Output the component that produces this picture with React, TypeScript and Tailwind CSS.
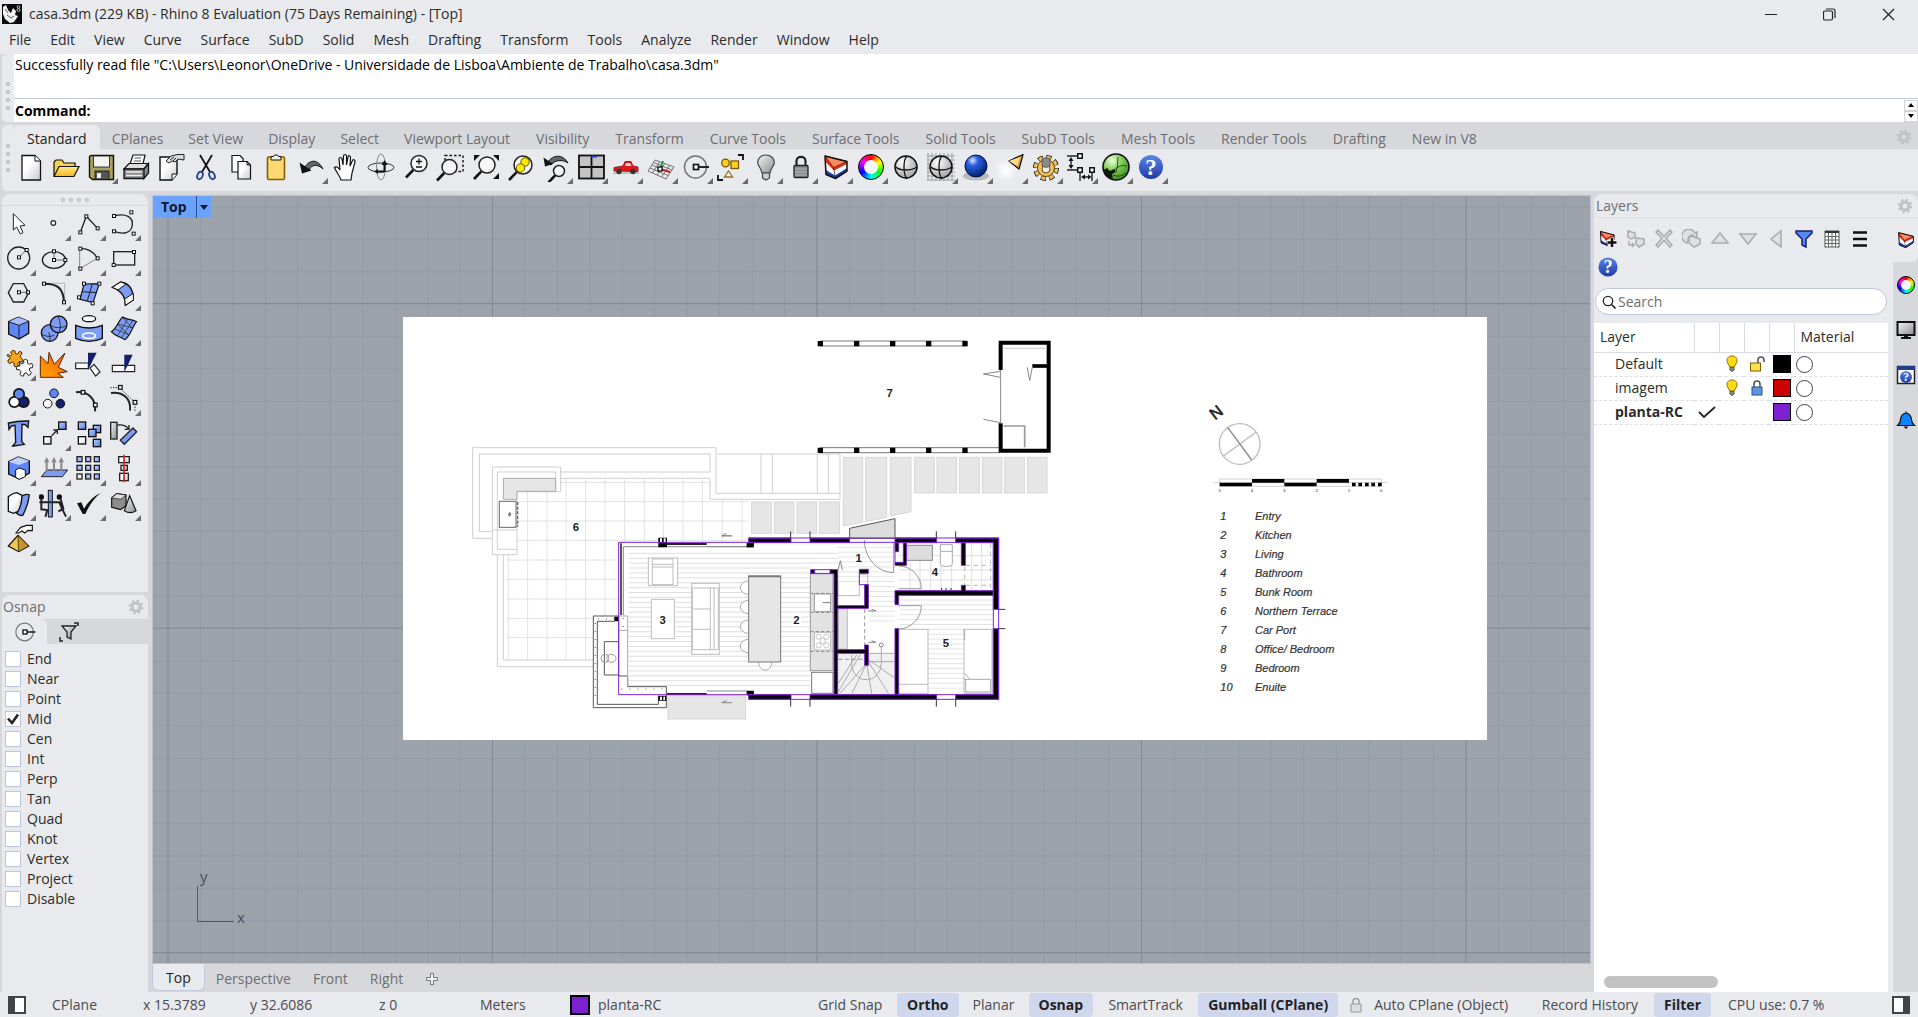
import React from "react";

type IconMap = Record<string, React.ReactNode>;

const BLUE = "#7c9cf5";
const NAVY = "#14206e";
const PURPLE = "#7d20d0";

/* Small square control point used across the curve icons. */
const Pt = ({ x, y, s = 9 }: { x: number; y: number; s?: number }) => (
  <rect x={x - s / 2} y={y - s / 2} width={s} height={s} fill="#fff" stroke="#111" strokeWidth={s / 3} />
);

const Defs = () => (
  <svg width="0" height="0" className="absolute" aria-hidden="true">
    <defs>
      <linearGradient id="paper" x1="0" y1="0" x2="1" y2="1">
        <stop offset="0.4" stopColor="#fff" />
        <stop offset="1" stopColor="#c9c9c9" />
      </linearGradient>
      <linearGradient id="gold" x1="0" y1="0" x2="0" y2="1">
        <stop offset="0" stopColor="#ffe98a" />
        <stop offset="1" stopColor="#f5b517" />
      </linearGradient>
      <linearGradient id="blueg" x1="0" y1="0" x2="1" y2="1">
        <stop offset="0" stopColor="#c0d0ff" />
        <stop offset="1" stopColor="#5078e8" />
      </linearGradient>
      <linearGradient id="greyg" x1="0" y1="0" x2="1" y2="1">
        <stop offset="0" stopColor="#f5f5f5" />
        <stop offset="1" stopColor="#8c8c8c" />
      </linearGradient>
      <linearGradient id="helpg" x1="0" y1="0" x2="0" y2="1">
        <stop offset="0" stopColor="#5a86e6" />
        <stop offset="1" stopColor="#1f3aa6" />
      </linearGradient>
      <linearGradient id="fire" x1="1" y1="0" x2="0" y2="1">
        <stop offset="0" stopColor="#ff5a00" />
        <stop offset="1" stopColor="#ffa600" />
      </linearGradient>
      <radialGradient id="ballg" cx="0.35" cy="0.3" r="0.8">
        <stop offset="0" stopColor="#fff" />
        <stop offset="1" stopColor="#9a9a9a" />
      </radialGradient>
      <radialGradient id="ballb" cx="0.35" cy="0.25" r="0.8">
        <stop offset="0" stopColor="#dbe8ff" />
        <stop offset="0.3" stopColor="#2b5fe0" />
        <stop offset="1" stopColor="#001a66" />
      </radialGradient>
      <radialGradient id="balln" cx="0.35" cy="0.25" r="0.8">
        <stop offset="0" stopColor="#e9ffd9" />
        <stop offset="0.5" stopColor="#7cc950" />
        <stop offset="1" stopColor="#3f8a25" />
      </radialGradient>
      <radialGradient id="glow">
        <stop offset="0" stopColor="#fff" />
        <stop offset="1" stopColor="#fff" stopOpacity="0" />
      </radialGradient>
    </defs>
  </svg>
);

const Lens = ({ x, y, r = 6 }: { x: number; y: number; r?: number }) => (
  <>
    <path d={`M${x - r * 0.7} ${y + r * 0.8}L${x - r - 5} ${y + r + 6}`} stroke="#111" strokeWidth="2.6" />
    <circle cx={x} cy={y} r={r} fill="#f7f7f7" stroke="#222" strokeWidth="1.5" />
  </>
);

const LayerGlyph = () => (
  <>
    <path d="M4 4L26 9.500V19L14.500 26.500L5 22.500Z" fill="#1c3fae" />
    <path d="M4 4L26 9.500V16L14 23.500L5 18Z" fill="#fff" />
    <path d="M4 4L26 9.500V12L13 18.500L4.500 10Z" fill="#e0301e" />
    <path d="M4 4L26 9.500L12.500 15.500Z" fill="#ff8a60" stroke="#5a1000" strokeWidth="0.700" />
    <path d="M12.500 15.500L14.500 26.500" stroke="#111" strokeWidth="0.700" />
    <path d="M4 4L26 9.500V19L14.500 26.500L5 22.500Z" fill="none" stroke="#111" strokeWidth="1.500" strokeLinejoin="round" />
  </>
);

const HelpGlyph = () => (
  <>
    <circle cx="15" cy="15" r="12" fill="url(#helpg)" />
    <text x="15" y="23" textAnchor="middle" fontFamily="Liberation Serif, serif" fontWeight="bold" fontSize="23" fill="#fff">
      ?
    </text>
  </>
);

const wires = "M5 15C9 19 20 19 26 15M16 4C12 8 12 22 16 27";

/* Each glyph of the standard toolbar lives in a 30 by 30 box. */
const bar: IconMap = {
  New: (
    <>
      <path d="M6 3.5H19L24.5 9V28H6Z" fill="url(#paper)" stroke="#111" strokeWidth="1.3" />
      <path d="M19 3.5V9H24.5" fill="#fff" stroke="#111" />
    </>
  ),
  Open: (
    <>
      <path d="M3 24V10L5 8H11L13 11H24V15" fill="#f6d14b" stroke="#111" strokeWidth="1.2" />
      <path d="M3 24.5L8 14.5H28L23 24.5Z" fill="url(#gold)" stroke="#111" strokeWidth="1.2" />
    </>
  ),
  Save: (
    <>
      <path d="M3.5 4.5L5 3.5H27.5V27.5H6.5L3.5 25Z" fill="#aaa15c" stroke="#111" strokeWidth="1.4" />
      <rect x="7.5" y="4" width="16" height="11" fill="#f2f2f2" stroke="#111" strokeWidth="0.8" />
      <rect x="9" y="19" width="14" height="8.5" fill="#555" stroke="#111" strokeWidth="0.8" />
      <rect x="11" y="21" width="4" height="5" fill="#eee" />
    </>
  ),
  Print: (
    <>
      <path d="M9 12L12 3H24L22 12" fill="#fff" stroke="#111" strokeWidth="1.2" />
      <path d="M13.5 6H20M13 9H20" stroke="#555" />
      <path d="M3 17L8 11.5H27L23 17Z" fill="#ddd" stroke="#111" strokeWidth="1.2" />
      <path d="M3 17H23V26.5H3ZM23 17L27.5 11.5V21L23 26.5Z" fill="#888" stroke="#111" strokeWidth="1.3" />
      <path d="M5 20H21M5 23.5H21" stroke="#eee" strokeWidth="1.4" />
    </>
  ),
  Properties: (
    <>
      <path d="M4 5H21V22L16 28H4Z" fill="url(#paper)" stroke="#111" strokeWidth="1.4" />
      <path d="M16 28V22H21" fill="#fff" stroke="#111" />
      <path d="M10 9L15 4L22 2.5H28V8L22 7L19 10L16 9L13 11Z" fill="#ddd" stroke="#222" />
      <path d="M14 8L18 5M17 9L20 6" stroke="#222" />
    </>
  ),
  Cut: (
    <>
      <path d="M9 3L19 20M21 3L11 20" stroke="#111" strokeWidth="1.8" />
      <ellipse cx="9" cy="23.5" rx="2.6" ry="3.8" transform="rotate(25 9 23.5)" fill="none" stroke="#2a3f90" strokeWidth="1.8" />
      <ellipse cx="21" cy="23.5" rx="2.6" ry="3.8" transform="rotate(-25 21 23.5)" fill="none" stroke="#2a3f90" strokeWidth="1.8" />
    </>
  ),
  Copy: (
    <>
      <path d="M6 3.5H14L17 6.5V20H6Z" fill="#fff" stroke="#111" strokeWidth="1.2" />
      <path d="M12 9.5H21L24.5 13V27H12Z" fill="url(#paper)" stroke="#111" strokeWidth="1.2" />
      <path d="M21 9.5V13H24.5" fill="none" stroke="#111" />
    </>
  ),
  Paste: (
    <>
      <rect x="6.5" y="5" width="17" height="22.5" rx="1.5" fill="#fdd873" stroke="#8a5a00" strokeWidth="1.6" />
      <path d="M10 8V4.5H12.5L13.5 3H16.5L17.5 4.5H20V8Z" fill="#eee" stroke="#111" />
    </>
  ),
  Undo: (
    <>
      <path d="M9 15C14 7 22 7 27 17C22 12 16 12 13 18Z" fill="#666" stroke="#111" />
      <path d="M3.5 10.5L6 21.5L15.5 18.5Z" fill="#111" />
    </>
  ),
  Pan: (
    <path
      d="M10 28C9 24 5 20 3.500 15.500C5 14 7 15 9 18L8 7C8 5 10.500 5 11 7L12 13L12.500 4C13 2 15 2 15.500 4V13L17 5C17.500 3 19.500 3.500 19.500 5.500L19 14L21.500 8.500C22.500 7 24.500 8 24 10L21 21L20 28Z"
      fill="#fff"
      stroke="#111"
      strokeWidth="1.2"
    />
  ),
  Rotate: (
    <>
      <ellipse cx="15" cy="15.500" rx="13" ry="4.500" fill="none" stroke="#333" />
      <ellipse cx="15" cy="15" rx="4.500" ry="13" fill="none" stroke="#888" />
      <path d="M18.500 10V20M10 19.500H18" stroke="#111" strokeWidth="2" />
      <path d="M18.500 8L15.500 13H21.500ZM8 19.500L12 17V22Z" fill="#111" />
    </>
  ),
  "Zoom dynamic": (
    <>
      <Lens x={18} y={11.500} r={8} />
      <path d="M18 6.500V12.500M15 9.500H21M15 15H21" stroke="#111" strokeWidth="1.300" />
    </>
  ),
  "Zoom window": (
    <>
      <rect x="9" y="3.500" width="18" height="16" fill="none" stroke="#111" strokeDasharray="2.500 2" strokeWidth="1.400" />
      <Lens x={13.500} y={15} r={7.500} />
    </>
  ),
  "Zoom extents": (
    <>
      <Lens x={16} y={13} r={8} />
      <path d="M3 3H9L3 9ZM28 3H22L28 9ZM28 27H22L28 21Z" fill="#111" />
    </>
  ),
  "Zoom selected": (
    <>
      <Lens x={17} y={13} r={9} />
      <circle cx="19" cy="10" r="4.200" fill="#ffe800" stroke="#665c00" />
      <circle cx="14.500" cy="16" r="4.200" fill="#ffe800" stroke="#665c00" />
    </>
  ),
  "Undo view": (
    <>
      <path d="M6 11C12 2 22 2 27 11C21 7 14 8 10 13Z" fill="#666" stroke="#111" />
      <path d="M2.500 5.500L4 14.500L12 12Z" fill="#111" />
      <Lens x={18} y={19} r={5.500} />
    </>
  ),
  Viewports: (
    <>
      <rect x="3" y="3.500" width="25" height="23" fill="#c3c3c3" stroke="#111" strokeWidth="1.800" />
      <path d="M15.500 3.500V27M3 15H28" stroke="#111" strokeWidth="1.800" />
      <path d="M15.500 4.500H21" stroke="#2438c8" strokeWidth="2" />
    </>
  ),
  Car: (
    <>
      <path d="M2 21H28" stroke="#999" />
      <path d="M3 19V15.500L12 14L14 9.500H20L22 14L27 15V19.500Z" fill="#e01818" stroke="#801010" strokeWidth="0.800" />
      <path d="M15 11H19L20.500 14H14Z" fill="#f3d5d5" />
      <circle cx="8" cy="19.500" r="2.700" fill="#333" />
      <circle cx="22" cy="19.500" r="2.700" fill="#333" />
    </>
  ),
  CPlane: (
    <>
      <path d="M2 19L9 8L28 15L20 27ZM4 16L22 23.500M6 13L24 20.500M7.500 10.500L26 18M6.500 21L13.500 10M11 23L18.500 12M15.500 25L23.500 13.500" fill="none" stroke="#666" strokeWidth="0.900" />
      <path d="M14 17L17 9" stroke="#18a030" strokeWidth="2" />
      <path d="M14 17L24 20" stroke="#d01818" strokeWidth="2" />
      <Pt x={14} y={17} s={4} />
    </>
  ),
  Osnap: (
    <>
      <circle cx="14.500" cy="15" r="11" fill="none" stroke="#777" strokeWidth="1.500" />
      <path d="M15 15H28" stroke="#111" strokeWidth="1.800" />
      <Pt x={15} y={15} s={5} />
    </>
  ),
  Select: (
    <>
      <circle cx="9.500" cy="11" r="3.800" fill="#ffd21a" stroke="#7a5600" strokeWidth="1.300" />
      <rect x="15" y="9" width="7.500" height="7.500" fill="#ffd21a" stroke="#7a5600" strokeWidth="1.300" />
      <path d="M12.500 19L16.500 25H8.500Z" fill="#fff" stroke="#9a6a20" strokeWidth="1.300" />
      <path d="M22 3H27V8M2 23V28H7" fill="none" stroke="#111" strokeWidth="1.800" />
    </>
  ),
  Hide: (
    <>
      <path d="M15 3C9 3 6 7.500 7 12C8 15 10.500 17 11 21H19C19.500 17 22 15 23 12C24 7.500 21 3 15 3Z" fill="url(#greyg)" stroke="#444" strokeWidth="1.200" />
      <path d="M11.500 21H18.500V26L15 28L11.500 26Z" fill="#ccc" stroke="#444" strokeWidth="1.200" />
    </>
  ),
  Lock: (
    <>
      <path d="M10.500 14V9C10.500 3.500 19.500 3.500 19.500 9V14" fill="none" stroke="#222" strokeWidth="2.200" />
      <rect x="8" y="13.500" width="14" height="12" rx="1" fill="#8c8c8c" stroke="#222" strokeWidth="1.300" />
      <path d="M9 17H21M9 20H21M9 23H21" stroke="#b5b5b5" />
    </>
  ),
  Layers: <LayerGlyph />,
  "Display mode": (
    <>
      <circle cx="15" cy="15" r="11" fill="url(#ballg)" stroke="#111" strokeWidth="1.500" />
      <path d={wires} fill="none" stroke="#111" strokeWidth="1.300" />
    </>
  ),
  "Shaded grid": (
    <>
      <path d="M1 4H29M1 8H29M1 12H29M1 16H29M1 20H29M1 24H29M1 28H29M2 1V29M6 1V29M10 1V29M14 1V29M18 1V29M22 1V29M26 1V29" stroke="#999" strokeWidth="0.900" />
      <circle cx="15" cy="15" r="11" fill="url(#ballg)" stroke="#111" strokeWidth="1.500" />
      <path d={wires} fill="none" stroke="#111" strokeWidth="1.300" />
    </>
  ),
  Render: (
    <>
      <ellipse cx="15" cy="24" rx="13" ry="4.500" fill="#999" opacity="0.600" />
      <circle cx="15" cy="14" r="11" fill="url(#ballb)" stroke="#001040" />
    </>
  ),
  Spotlight: (
    <>
      <circle cx="10" cy="18" r="12" fill="url(#glow)" />
      <path d="M13 9L27 2.500L23 17Z" fill="#f5a83a" stroke="#111" strokeWidth="1.300" strokeLinejoin="round" />
      <path d="M13 9L24 5L21 14Z" fill="#ffd98c" />
    </>
  ),
  Options: (
    <>
      <circle cx="15" cy="16" r="10.500" fill="none" stroke="#111" strokeWidth="5" strokeDasharray="5 3.240" />
      <circle cx="15" cy="16" r="10.500" fill="none" stroke="#f0c060" strokeWidth="3.400" strokeDasharray="4 4.240" strokeDashoffset="-0.500" />
      <circle cx="15" cy="16" r="8.500" fill="#f0c060" stroke="#6b4a10" />
      <circle cx="15" cy="17" r="4" fill="#e9eaed" stroke="#6b4a10" />
      <path d="M11 7Q15 4 19 7V14Q15 17 11 14Z" fill="#8a8a8a" stroke="#444" strokeWidth="0.700" />
    </>
  ),
  Dimension: (
    <>
      <path d="M1 4H14M1 18H14M5 7V15M14 19V29M26 19V29M17 25H24" stroke="#222" strokeWidth="1.400" />
      <path d="M5 5L2.500 9H7.500ZM5 17L2.500 13H7.500ZM15 25L19 22.500V27.500ZM25.500 25L22 22.500V27.500Z" fill="#111" />
      <Pt x={14} y={4} s={4.500} />
      <Pt x={14} y={18} s={4.500} />
      <Pt x={26} y={18} s={4.500} />
    </>
  ),
  Grasshopper: (
    <>
      <circle cx="15" cy="15" r="13" fill="url(#balln)" stroke="#111" strokeWidth="1.600" />
      <path d="M2.500 18L6 16L9 19L13 17L15 20L11 22L12 27Q4 25 2.500 18Z" fill="#0c1a08" />
      <path d="M13 18Q19 12 26 14M15 20Q17 15 17 5M12 23Q19 26 25 21" fill="none" stroke="#214f14" />
    </>
  ),
  Help: <HelpGlyph />,
};

const barOrder: [string, boolean][] = [
  ["New", false], ["Open", false], ["Save", true], ["Print", false], ["Properties", false], ["Cut", false],
  ["Copy", false], ["Paste", false], ["Undo", true], ["Pan", false], ["Rotate", false], ["Zoom dynamic", false],
  ["Zoom window", false], ["Zoom extents", false], ["Zoom selected", false], ["Undo view", true],
  ["Viewports", true], ["Car", true], ["CPlane", true], ["Osnap", true], ["Select", true], ["Hide", true],
  ["Lock", true], ["Layers", true], ["Color", true], ["Display mode", false], ["Shaded grid", true],
  ["Render", true], ["Spotlight", true], ["Options", true], ["Dimension", true], ["Grasshopper", true], ["Help", true],
];

const Flyout = () => (
  <svg viewBox="0 0 6 6" className="absolute bottom-0 right-0 size-1.5" aria-hidden="true">
    <path d="M6 0V6H0Z" fill="#6b6b6b" />
  </svg>
);

const ColorRing = ({ small = false }: { small?: boolean }) => (
  <span
    className={
      "flex items-center justify-center rounded-full border border-black bg-[conic-gradient(#f00,#ff0,#0f0,#0ff,#00f,#f0f,#f00)] " +
      (small ? "size-[18px]" : "size-[26px]")
    }
  >
    <span className={"rounded-full bg-[#f6f6f8] " + (small ? "size-2.5" : "size-3.5")} />
  </span>
);

/* The side toolbox: drawn on one sheet with 105 units between the cells. */
const st = { fill: "none", stroke: "#222", strokeWidth: 4 };
const tools: { name: string; fly: boolean; art: React.ReactNode }[] = [
  { name: "Select objects", fly: false, art: <path d="M40 69V118L50 109L61 130L69 126L60 106L75 104Z" fill="#fff" stroke="#222" strokeWidth="3" /> },
  { name: "Point", fly: true, art: <circle cx="160" cy="97" r="7" fill="#fff" stroke="#222" strokeWidth="3.500" /> },
  { name: "Polyline", fly: true, art: <><path d="M241 125L259 77L293 113" {...st} /><Pt x={241} y={125} /><Pt x={259} y={77} /><Pt x={293} y={113} /></> },
  { name: "Curve", fly: true, art: <><path d="M342 76C378 66 400 80 397 103C394 128 370 132 342 122" {...st} /><Pt x={342} y={76} /><Pt x={394} y={65} /><Pt x={342} y={122} /><Pt x={401} y={129} /></> },
  { name: "Circle", fly: true, art: <><circle cx="56" cy="202" r="33" {...st} /><path d="M57 200L79 178" {...st} strokeWidth={2} /><Pt x={57} y={200} /><Pt x={80} y={178} /></> },
  { name: "Ellipse", fly: true, art: <><ellipse cx="162" cy="208" rx="35" ry="25" {...st} /><path d="M162 182V208H195" {...st} strokeWidth={2} /><Pt x={162} y={182} /><Pt x={162} y={208} /><Pt x={196} y={208} /></> },
  { name: "Arc", fly: true, art: <><path d="M239 174V234L292 203" {...st} stroke="#888" strokeWidth={3} /><path d="M241 174C262 172 282 184 292 203" {...st} /><Pt x={241} y={174} /><Pt x={241} y={234} /><Pt x={293} y={203} /></> },
  { name: "Rectangle", fly: true, art: <><rect x="341" y="183" width="63" height="40" {...st} /><Pt x={402} y={184} /><Pt x={341} y={223} /></> },
  { name: "Polygon", fly: true, art: <><path d="M25 306L40 279H71L86 306L71 334H40Z" {...st} /><path d="M57 305H84" {...st} strokeWidth={2} /><Pt x={57} y={305} /><Pt x={84} y={305} /></> },
  { name: "Fillet curves", fly: true, art: <><path d="M132 278H194V335" {...st} stroke="#999" strokeWidth={2} /><path d="M132 279C170 279 190 290 192 335" {...st} strokeWidth={6} /><Pt x={132} y={279} /><Pt x={192} y={335} /></> },
  { name: "Surface from points", fly: true, art: <><path d="M252 280L298 279L279 336L240 326Z" fill={BLUE} stroke="#111" strokeWidth="3.500" /><path d="M277 280L262 330M246 303L290 306" {...st} strokeWidth={3} /><Pt x={252} y={279} /><Pt x={298} y={279} /><Pt x={237} y={320} /><Pt x={278} y={338} /></> },
  { name: "Extrude curve", fly: true, art: <><path d="M337 290L362 274C385 277 400 295 400 328L376 344C377 315 363 300 337 290Z" fill={BLUE} stroke="#111" strokeWidth="4" /><path d="M337 290L362 274L378 280L354 298ZM374 325L400 308V328L376 344Z" fill="#fff" stroke="#111" strokeWidth="3" /></> },
  { name: "Box", fly: true, art: <><path d="M26 393L55 380L86 392V428L57 445L26 430Z" fill="#5f86f5" stroke="#111" strokeWidth="4" /><path d="M26 393L55 380L86 392L57 404Z" fill="#a9bcfa" /><path d="M26 393L57 404L86 392M57 404V444" {...st} strokeWidth={3} /></> },
  { name: "Boolean union", fly: true, art: <><circle cx="149" cy="427" r="25" fill={BLUE} stroke="#111" strokeWidth="4" /><circle cx="176" cy="401" r="25" fill={BLUE} stroke="#111" strokeWidth="4" /><path d="M152 405Q175 417 200 405M174 377Q186 400 178 425M126 431Q145 442 162 434M146 425Q152 440 150 451" {...st} strokeWidth={2.500} /></> },
  { name: "Revolve surface", fly: true, art: <><ellipse cx="267" cy="384" rx="20" ry="9" fill="#fff" stroke="#111" strokeWidth="4" /><path d="M227 404Q267 420 307 404V443Q267 461 227 443Z" fill={BLUE} stroke="#111" strokeWidth="4" /><ellipse cx="267" cy="435" rx="19" ry="8" fill="none" stroke="#fff" strokeWidth="5" /></> },
  { name: "Mesh", fly: true, art: <><path d="M334 423C350 415 358 385 368 379C380 388 392 384 410 393C398 405 390 440 374 447C362 437 348 440 334 423Z" fill={BLUE} stroke="#111" strokeWidth="3.500" /><path d="M352 400L400 412M343 414L386 432M384 385L352 436M398 390L364 442M352 400L386 432M368 380L398 414" {...st} strokeWidth={2} /></> },
  {
    name: "Join",
    fly: true,
    art: (
      <>
        <path d="M24 490L31 496L36 492L32 484Q38 476 45 481L46 489L53 490L58 482Q66 482 66 490L60 496L64 503Q72 506 68 514L58 513L53 519L55 526Q48 532 42 526L43 518L37 514L29 519Q22 516 24 508L31 504L28 498Q18 498 24 490Z" fill="#f8a51b" stroke="#4b3000" strokeWidth="3" />
        <path d="M58 514L66 520L72 516L70 509Q77 503 83 509L82 517L88 521L95 518Q101 524 97 531L89 532L88 539L94 546Q92 555 85 554L79 546L72 549L71 556Q63 558 60 551L63 543L58 537L50 537Q47 530 53 526L60 526Z" fill="#fff" stroke="#222" strokeWidth="3" />
      </>
    ),
  },
  { name: "Explode", fly: false, art: <path d="M121 560V496L144 519L147 485L163 521L195 487L175 530L202 543L173 548L190 560Z" fill="url(#fire)" stroke="#5a2400" strokeWidth="3" /> },
  { name: "Trim", fly: false, art: <><path d="M227 517H265V534H227Z" fill="#fff" stroke="#222" strokeWidth="3.500" /><path d="M270 532L282 521L300 544L287 556Z" fill="#fff" stroke="#222" strokeWidth="3.500" /><path d="M264 486H290L264 538Z" fill={NAVY} /></> },
  { name: "Split", fly: false, art: <><path d="M337 524H404V543H337Z" fill="#fff" stroke="#222" strokeWidth="3.500" /><path d="M373 492H398L373 545Z" fill={NAVY} /></> },
  { name: "Group", fly: true, art: <><circle cx="57" cy="610" r="18" fill="#111" /><circle cx="43" cy="634" r="18" fill="#111" /><circle cx="71" cy="634" r="18" fill="#111" /><circle cx="57" cy="610" r="13" fill="#5f86f5" /><circle cx="43" cy="634" r="13" fill="#fff" /><circle cx="71" cy="634" r="13" fill={NAVY} /></> },
  { name: "Ungroup", fly: false, art: <><circle cx="162" cy="608" r="13" fill="#5f86f5" stroke="#111" strokeWidth="3" /><circle cx="143" cy="639" r="13" fill="#fff" stroke="#111" strokeWidth="3" /><circle cx="181" cy="639" r="13" fill={NAVY} stroke="#111" strokeWidth="3" /></> },
  { name: "Edit points", fly: false, art: <><path d="M228 605C262 600 290 625 285 662" {...st} strokeWidth={6} /><Pt x={249} y={605} s={11} /><Pt x={286} y={643} s={11} /></> },
  { name: "Control points", fly: true, art: <><path d="M333 607C370 602 394 625 390 660" {...st} strokeWidth={6} /><path d="M331 591H358L405 635V664" {...st} strokeWidth={3} strokeDasharray="4 4" /><Pt x={361} y={590} s={11} /><Pt x={405} y={635} s={11} /></> },
  { name: "Text", fly: false, art: <path d="M25 697Q55 690 86 691L84 710L76 702L66 701L65 752L73 761Q55 764 38 766L47 755L45 704L34 706L27 716Z" fill={BLUE} stroke="#111" strokeWidth="4" /> },
  { name: "Move", fly: true, art: <><rect x="131" y="738" width="22" height="22" fill="url(#paper)" stroke="#111" strokeWidth="4" /><rect x="176" y="694" width="22" height="22" fill="url(#blueg)" stroke="#111" strokeWidth="4" /><path d="M155 735L172 718M160 718H172V730" {...st} /></> },
  { name: "Copy objects", fly: false, art: <><rect x="235" y="694" width="22" height="22" fill="url(#blueg)" stroke="#111" strokeWidth="4" /><rect x="280" y="704" width="22" height="22" fill="url(#blueg)" stroke="#111" strokeWidth="4" /><rect x="266" y="716" width="22" height="22" fill="url(#blueg)" stroke="#111" strokeWidth="4" /><rect x="235" y="738" width="22" height="22" fill="url(#paper)" stroke="#111" strokeWidth="4" /><rect x="280" y="746" width="22" height="22" fill="url(#blueg)" stroke="#111" strokeWidth="4" /></> },
  { name: "Rotate objects", fly: false, art: <><rect x="332" y="695" width="19" height="50" fill="url(#greyg)" stroke="#222" strokeWidth="4" /><path d="M361 749L399 712L410 723L373 761Z" fill={BLUE} stroke="#222" strokeWidth="4" /><path d="M353 703Q375 700 385 714M387 703V716H374" {...st} /></> },
  { name: "Boolean difference", fly: true, art: <><path d="M26 813L55 799L88 811V847L57 864L26 850Z" fill="#5f86f5" stroke="#111" strokeWidth="4" /><path d="M26 813L55 799L88 811L57 823Z" fill="#c3d0fc" /><path d="M47 838L57 832L76 838V858L57 866L47 860Z" fill="#fff" stroke="#111" strokeWidth="3" /></> },
  { name: "Project", fly: true, art: <><path d="M141 838H203L187 858H124Z" fill={BLUE} stroke="#222" strokeWidth="3" /><path d="M140 842V812M162 842V812M184 842V812" stroke="#8c8683" strokeWidth="6" /><path d="M140 799L132 815H148ZM162 799L154 815H170ZM184 799L176 815H192Z" fill="#8c8683" /></> },
  { name: "Array", fly: true, art: <>{[0, 1, 2].map((r) => [0, 1, 2].map((c) => <rect key={r + "-" + c} x={231 + c * 26} y={798 + r * 26} width="15" height="15" fill={r === 2 && c === 0 ? "#fff" : "#a9bcfa"} stroke="#222" strokeWidth="4" />))}</> },
  { name: "Align", fly: true, art: <><rect x="356" y="798" width="32" height="18" fill="url(#paper)" stroke="#222" strokeWidth="4" /><rect x="363" y="824" width="19" height="15" fill="#ddd" stroke="#222" strokeWidth="4" /><rect x="359" y="848" width="26" height="22" fill="url(#paper)" stroke="#222" strokeWidth="4" /><path d="M372 792V875" stroke="#e02020" strokeWidth="5" /></> },
  { name: "Unroll", fly: true, art: <><path d="M25 918Q35 908 50 906L68 915L60 960L40 968L25 962Z" fill="url(#paper)" stroke="#111" strokeWidth="4" /><path d="M66 916Q78 908 88 913Q84 945 68 974Q58 976 50 968Q64 950 66 916Z" fill={BLUE} stroke="#111" strokeWidth="4" /></> },
  { name: "Symmetry", fly: true, art: <><rect x="145" y="899" width="12" height="80" fill={BLUE} stroke="#111" strokeWidth="3" /><circle cx="124" cy="919" r="8" fill="#111" /><circle cx="178" cy="919" r="8" fill="#111" /><path d="M118 935H150M124 926V956L142 958L136 978M156 935H178L186 954L198 978M182 926L190 954L175 962M150 935H180" fill="none" stroke="#222" strokeWidth="6" /></> },
  { name: "Check", fly: true, art: <path d="M231 938L244 935L252 954Q270 922 302 906Q272 932 256 970H248Z" fill="#111" /> },
  { name: "Solids", fly: true, art: <><path d="M335 922L350 909L378 913V945L362 957L335 950Z" fill="#8d8d8d" stroke="#111" strokeWidth="3.500" /><path d="M335 922L350 909L378 913L363 926Z" fill="#ddd" stroke="#111" strokeWidth="2" /><path d="M389 915L408 960Q391 972 373 960Z" fill="url(#greyg)" stroke="#111" strokeWidth="3.500" /></> },
  { name: "Drape", fly: true, art: <><path d="M25 1066L54 1034L86 1066L56 1083Z" fill="#f0c84e" stroke="#111" strokeWidth="3.500" /><path d="M54 1034L56 1083L86 1066Z" fill="#c9952a" stroke="#111" strokeWidth="2" /><path d="M48 1027L62 1010L80 1004H97V1020L84 1019L74 1027L66 1021L56 1027Z" fill="#fff" stroke="#111" strokeWidth="3.500" /></> },
];

const Gear = () => (
  <svg viewBox="0 0 16 16" className="size-4 text-[#c1c2c5]" aria-hidden="true">
    <circle cx="8" cy="8" r="4" fill="none" stroke="currentColor" strokeWidth="3" />
    <circle cx="8" cy="8" r="6.300" fill="none" stroke="currentColor" strokeWidth="2" strokeDasharray="2.470 2.470" />
  </svg>
);

const Dots = ({ vertical = false }: { vertical?: boolean }) => (
  <span className={"flex gap-1 " + (vertical ? "flex-col" : "")} aria-hidden="true">
    {[0, 1, 2, 3].map((i) => (
      <span key={i} className="size-1 rounded-full border border-[#aeb0b5]" />
    ))}
  </span>
);

const menus = ["File", "Edit", "View", "Curve", "Surface", "SubD", "Solid", "Mesh", "Drafting", "Transform", "Tools", "Analyze", "Render", "Window", "Help"];
const toolTabs = ["Standard", "CPlanes", "Set View", "Display", "Select", "Viewport Layout", "Visibility", "Transform", "Curve Tools", "Surface Tools", "Solid Tools", "SubD Tools", "Mesh Tools", "Render Tools", "Drafting", "New in V8"];
const snaps = ["End", "Near", "Point", "Mid", "Cen", "Int", "Perp", "Tan", "Quad", "Knot", "Vertex", "Project", "Disable"];
const legend = ["Entry", "Kitchen", "Living", "Bathroom", "Bunk Room", "Northern Terrace", "Car Port", "Office/ Bedroom", "Bedroom", "Enuite"];

const TitleBar = () => (
  <header className="flex h-7 shrink-0 items-center">
    <svg viewBox="0 0 20 20" className="ml-0.5 size-5" aria-hidden="true">
      <rect width="20" height="20" fill="#0a0a0a" />
      <path d="M1 3L4 1L6 6L9 9L11 4L14 7L13 11L16 12L12 18L8 19L3 15L1 10Z" fill="#f4f4f4" />
      <path d="M5 11L9 14L12 12M3 5L6 9" stroke="#555" fill="none" />
      <circle cx="16.500" cy="3" r="1.300" fill="none" stroke="#bbb" />
      <circle cx="16.500" cy="6" r="1.500" fill="none" stroke="#bbb" />
    </svg>
    <h1 className="ml-[7px] flex-1 whitespace-nowrap">casa.3dm (229 KB) - Rhino 8 Evaluation (75 Days Remaining) - [Top]</h1>
    <button type="button" aria-label="Minimize" className="flex h-7 w-[58px] items-center justify-center">
      <svg viewBox="0 0 12 12" className="size-3"><path d="M0 6.500H12" stroke="#222" /></svg>
    </button>
    <button type="button" aria-label="Restore" className="flex h-7 w-[58px] items-center justify-center">
      <svg viewBox="0 0 13 13" className="size-[13px]" fill="none" stroke="#222" strokeWidth="1.200"><rect x="0.500" y="3" width="9" height="9" rx="1.500" /><path d="M3 1H10Q12 1 12 3V10" /></svg>
    </button>
    <button type="button" aria-label="Close" className="flex h-7 w-[60px] items-center justify-center">
      <svg viewBox="0 0 13 13" className="size-[13px]"><path d="M1 1L12 12M12 1L1 12" stroke="#222" strokeWidth="1.200" /></svg>
    </button>
  </header>
);

const CommandArea = () => (
  <section className="flex h-[68px] shrink-0 bg-[#d7d8dc] pl-0.5">
    <div className="flex w-3 items-center justify-center rounded-l-md bg-[#e9eaed] pt-4">
      <Dots vertical />
    </div>
    <div className="flex flex-1 flex-col bg-white text-black">
      <p className="h-[45px] border-b border-[#c3c9dc] pl-px leading-[22px]">
        Successfully read file "C:\Users\Leonor\OneDrive - Universidade de Lisboa\Ambiente de Trabalho\casa.3dm"
      </p>
      <div className="flex flex-1 items-center">
        <label htmlFor="command" className="pl-px font-bold">Command:</label>
        <input id="command" className="h-5 flex-1 bg-transparent px-1 outline-none" />
        <div className="flex w-3.5 flex-col">
          <button type="button" aria-label="Previous line" className="flex h-[11px] items-center justify-center border border-neutral-300 bg-white">
            <svg viewBox="0 0 6 4" className="h-1 w-1.5"><path d="M3 0L6 4H0Z" /></svg>
          </button>
          <button type="button" aria-label="Next line" className="flex h-[11px] items-center justify-center border border-neutral-300 bg-white">
            <svg viewBox="0 0 6 4" className="h-1 w-1.5"><path d="M3 4L6 0H0Z" /></svg>
          </button>
        </div>
      </div>
    </div>
  </section>
);

const ToolBar = () => (
  <section className="flex shrink-0 bg-[#d7d8dc] py-[3px] pl-0.5">
    <div className="flex w-[11px] items-center justify-center rounded-l-md bg-[#e9eaed]">
      <Dots vertical />
    </div>
    <div className="min-w-0 flex-1">
      <div className="flex h-6 items-center">
        {toolTabs.map((t, i) => (
          <button
            key={t}
            type="button"
            className={
              "h-6 whitespace-nowrap pr-[13px] pt-1 text-sm leading-5 " +
              (i === 0 ? "rounded-t-md bg-[#e9eaed] pl-3.5 text-[#222]" : i < 6 ? "pl-3 text-[#6d6e72]" : "pl-[13px] text-[#6d6e72]")
            }
          >
            {t}
          </button>
        ))}
        <span className="flex-1" />
        <button type="button" aria-label="Toolbar options" className="mr-1.5"><Gear /></button>
      </div>
      <div className="flex h-[42px] bg-[#e9eaed]">
        {barOrder.map(([name, fly]) => (
          <button key={name} type="button" aria-label={name} className="relative flex size-[35px] items-center justify-center">
            {name === "Color" ? (
              <ColorRing />
            ) : (
              <svg viewBox="0 0 30 30" className="size-[30px]" fill="none" aria-hidden="true">{bar[name]}</svg>
            )}
            {fly && <Flyout />}
          </button>
        ))}
      </div>
    </div>
  </section>
);

const ToolBox = () => (
  <section className="h-[398px] rounded-t-lg bg-[#e9eaed]">
    <div className="flex h-3 items-center justify-center border-b border-[#d7d8dc]"><Dots /></div>
    <div className="-ml-px grid w-[140px] grid-cols-4">
      {tools.map((t, i) => (
        <button key={t.name} type="button" aria-label={t.name} className="relative flex size-[35px] items-center justify-center">
          <svg viewBox={`${12 + (i % 4) * 105} ${55 + Math.floor(i / 4) * 105} 90 90`} className="size-[30px]" aria-hidden="true">
            {t.art}
          </svg>
          {t.fly && <Flyout />}
        </button>
      ))}
    </div>
  </section>
);

const OsnapPanel = () => (
  <section className="flex flex-1 flex-col rounded-t-lg bg-[#e9eaed]">
    <div className="flex h-6 items-center justify-between pl-px pr-1 text-[#6d6e72]">
      <h2>Osnap</h2>
      <button type="button" aria-label="Osnap options"><Gear /></button>
    </div>
    <div className="flex h-[25px] bg-[#d7d8dc]">
      <button type="button" aria-label="Object snaps" className="flex w-[45px] items-center justify-center rounded-tr-md bg-[#e9eaed]">
        <svg viewBox="0 0 30 30" className="size-6" aria-hidden="true">{bar.Osnap}</svg>
      </button>
      <button type="button" aria-label="Selection filter" className="flex w-[44px] items-center justify-center">
        <svg viewBox="0 0 20 20" className="size-5" aria-hidden="true">
          <path d="M3 4H17L12 10V17L8 15V10Z" fill="url(#greyg)" stroke="#222" strokeWidth="1.300" />
          <path d="M15 1H19V4M1 15V19H4" fill="none" stroke="#222" strokeWidth="1.500" />
        </svg>
      </button>
    </div>
    <div className="flex flex-col pl-[3px] pt-[5px]">
      {snaps.map((s) => (
        <label key={s} className="flex h-5 items-center gap-1.5 whitespace-nowrap">
          <span className="relative size-4">
            <input type="checkbox" defaultChecked={s === "Mid"} className="peer block size-4 appearance-none border border-[#bfc6dc] bg-white" />
            <svg viewBox="0 0 16 16" className="pointer-events-none absolute inset-0 hidden size-4 peer-checked:block" aria-hidden="true">
              <path d="M3 7.500L7 12L13 3.500" fill="none" stroke="#222" strokeWidth="2.600" />
            </svg>
          </span>
          {s}
        </label>
      ))}
    </div>
  </section>
);

const num = { fontFamily: "Liberation Sans, sans-serif", fontWeight: "bold", fontSize: 34, fill: "#222", textAnchor: "middle" as const };
const range = (n: number) => Array.from({ length: n }, (_, i) => i);
const posts = [301, 410, 518, 626, 735];

const Terrace = () => (
  <g transform="translate(460 430) scale(0.33333)" fill="none" stroke="#cfcfcf" strokeWidth="3">
    <path
      stroke="#e2e2e2"
      d="M203 145V690M261 145V690M318 145V690M377 145V690M435 145V558M494 145V337M553 145V337M610 145V337M669 145V337M727 145V337M787 208V337M846 208V337M145 374V690M302 157H750M171 215H866M171 273H866M171 331H866M140 390H476M140 448H476M140 507H476M140 565H400M140 623H400"
    />
    <path d="M1140 190H768V53H38V325H97M97 305H58V72H750V126H302M302 145H750V208H1140M112 374V710H400M130 374V690H400M770 72H1140M903 72V190M937 72V190M1072 72V190M1105 72V190M1140 72V208" />
    <path fill="#fff" d="M302 185V111H97V374H171V208H171V185Z" />
    <path d="M287 185V126H112V358H171M97 300H171" />
    <path fill="#e6e6e6" stroke="#aaa" d="M130 145H287V184H171V208H130Z" />
    <rect x="118" y="214" width="50" height="78" fill="#fff" stroke="#666" />
    <path d="M173 216V290" stroke="#666" strokeDasharray="9 5" strokeWidth="4" />
    <ellipse cx="149" cy="253" rx="3" ry="5" fill="#777" stroke="#777" />
    <rect x="476" y="337" width="664" height="457" fill="#fff" stroke="none" />
    {range(28).map((i) => <path key={i} stroke="#dedede" d={`M506 ${370 + i * 14.700}H1050`} />)}
    <path stroke="#dedede" d="M1050 370H1140M1050 385H1140M1050 399H1140" />
    <rect x="624" y="797" width="233" height="70" fill="#e6e6e6" stroke="#d4d4d4" />
    <path d="M490 350H866M490 350V555" stroke="#888" />
    <path d="M483 340V555" stroke="#333" strokeWidth="5" />
    <path fill="#fff" stroke="#555" d="M476 558H400V833H619V770H503V738H476Z" />
    <path stroke="#555" d="M463 574H412V823H595V797M476 635H433V735H476" />
    <path stroke="#aaa" d="M476 558H503V770M476 601H503" />
    <path stroke="#555" strokeDasharray="2 22" strokeWidth="4" d="M406 580V820M485 777H610M415 567H470M490 565V600" />
    <circle cx="435" cy="685" r="12" stroke="#999" /><ellipse cx="454" cy="685" rx="14" ry="12" stroke="#999" />
    <path d="M595 323H621V352H595ZM862 338H881V352H862ZM862 783H881V797H862ZM595 797H619V812H595ZM463 560H476V574H463Z" fill="#000" stroke="none" />
    <path d="M600 325H606V336H600ZM611 325H617V336H611ZM600 800H606V810H600ZM610 800H615V810H610Z" fill="#fff" stroke="none" />
    <path d="M621 342H740M621 792H740" stroke="#222" strokeWidth="6" />
    <path d="M740 783H862M740 350H862" stroke="#888" />
    <path d="M785 317L800 310M785 317H815M785 818L800 812M785 818H815" stroke="#888" />
    <g stroke="#bdbdbd" fill="#fff">
      <rect x="565" y="384" width="88" height="83" /><rect x="577" y="387" width="62" height="77" /><path d="M577 403H639M577 411H639" />
      <rect x="574" y="508" width="69" height="118" />
      <rect x="695" y="460" width="83" height="213" /><rect x="697" y="474" width="78" height="185" /><path d="M751 474V659M762 474V659M697 537H751M697 598H751" />
    </g>
    <rect x="592" y="555" width="32" height="34" fill="#fff" stroke="none" />
    {[473, 531, 590, 648].map((y) => <path key={y} stroke="#aaa" fill="#fff" d={`M866 ${y - 20}A25 20 0 0 0 866 ${y + 20}`} />)}
    <path stroke="#aaa" fill="#fff" d="M896 697A19 23 0 0 0 935 697" />
    <rect x="866" y="438" width="96" height="258" fill="#e6e6e6" stroke="#777" /><path d="M866 439H962" stroke="#777" strokeWidth="5" />
    <rect x="1051" y="430" width="68" height="292" fill="#e2e2e2" stroke="#999" />
    <rect x="1063" y="492" width="49" height="53" fill="#fff" stroke="#999" /><path d="M1088 518H1112" stroke="#777" />
    <rect x="1063" y="607" width="49" height="53" fill="#fff" stroke="#bbb" />
    <path d="M1051 490H1119M1051 547H1119M1051 605H1119M1051 664H1119" stroke="#888" strokeDasharray="10 6" />
    {[[1076, 620], [1099, 620], [1076, 646], [1099, 646], [1088, 633]].map(([x, y]) => <circle key={x + "-" + y} cx={x} cy={y} r="8" stroke="#aaa" strokeWidth="2" />)}
    <rect x="1055" y="727" width="64" height="63" fill="#fff" stroke="#777" />
    <rect x="995" y="555" width="28" height="34" fill="#fff" stroke="none" />
    <text x="608" y="583" {...num} stroke="none">3</text>
    <text x="348" y="302" {...num} stroke="none">6</text>
    <text x="1009" y="583" {...num} stroke="none">2</text>
  </g>
);

const House = () => (
  <g transform="translate(720 310) scale(0.33333)" fill="none" stroke="#bbb" strokeWidth="3">
    <path d="M301 93H740M301 108H740M301 413H840M301 428H840" stroke="#777" />
    {posts.map((x) => <path key={x} d={`M${x - 8} 93h16v16h-16ZM${x - 8} 413h16v16h-16Z`} fill="#000" stroke="none" />)}
    <path d="M842 180V98H986V422H842V340" stroke="#000" strokeWidth="12" /><path d="M937 168H986" stroke="#000" strokeWidth="11" />
    <path d="M842 180V340M842 184L790 192L842 202M790 328L842 338M922 172L929 212L937 172" stroke="#888" />
    <path d="M850 115H980" stroke="#ccc" /><path d="M850 348H914V412" stroke="#999" strokeWidth="5" />
    <g fill="#e6e6e6" stroke="#d6d6d6">
      {[584, 651, 719, 787, 854, 922].map((x) => <rect key={x} x={x} y="442" width="59" height="107" />)}
      {[95, 163, 231, 299].map((x) => <rect key={x} x={x} y="576" width="59" height="94" />)}
      <path d="M370 442H428V636L370 648ZM437 442H500V622L437 635ZM511 442H573V605L511 618Z" />
    </g>
    <path d="M389 685V655L525 626V685Z" fill="#ddd" stroke="#555" />
    <rect x="353" y="697" width="467" height="457" fill="#fff" stroke="none" />
    {range(6).map((i) => <path key={i} stroke="#e3e3e3" d={`M540 ${870 + i * 14.700}H820`} />)}
    {range(13).map((i) => <path key={i} stroke="#e3e3e3" d={`M624 ${958 + i * 14.700}H732`} />)}
    {range(8).map((i) => <path key={i} stroke="#e3e3e3" d={`M353 ${712 + i * 14.700}H525M445 ${830 + i * 14.700}H525`} />)}
    <path stroke="#dedede" d="M570 766V842M600 697V842M632 697V842M663 697V842M695 697V842M755 697V842M785 697V842M536 780H820M536 810H820M536 737H820" />
    <path stroke="#bbb" strokeDasharray="14 10" d="M736 766H812M734 770V826M736 826H812M812 700V840" />
    <rect x="560" y="706" width="77" height="45" fill="#ddd" stroke="#888" />
    <path d="M661 704H697V760Q697 769 688 769H670Q661 769 661 760ZM661 724H697" fill="#fff" stroke="#aaa" />
    <path d="M665 834V842M678 834V842M693 834V842" stroke="#333" />
    <path d="M433 690A88 98 0 0 0 521 788V697M536 768A68 68 0 0 1 604 836H536M536 887H604A70 70 0 0 1 536 957" stroke="#999" />
    <rect x="536" y="958" width="88" height="192" fill="#fff" /><path d="M536 1123H624" />
    <rect x="732" y="958" width="84" height="192" fill="#fff" /><path d="M732 1108H812V1146H737V1108M734 1090L750 1108M734 958V990" stroke="#aaa" />
    <rect x="355" y="897" width="27" height="120" fill="#e6e6e6" />
    <path d="M355 857H418V793H443V823H430" fill="none" />
    <rect x="353" y="1030" width="171" height="124" fill="#f0f0f0" stroke="none" />
    <path d="M440 1060L360 1150M440 1060L396 1150M440 1060L455 1150M445 1055L505 1150M447 1050L522 1103M445 1055H522M445 1030H522M355 1120L410 1035M355 1145L420 1035" stroke="#888" strokeWidth="2" />
    <path d="M484 1010V1060A45 50 0 0 1 395 1070V1035" stroke="#aaa" /><circle cx="484" cy="1005" r="6" stroke="#888" />
    <path d="M355 1048H430M434 897V1005" stroke="#999" strokeDasharray="12 8" />
    <path d="M354 780L361 752L367 780M445 903H468L455 898M445 997H468L455 992M5 678H35" stroke="#888" />
    <path
      stroke={PURPLE}
      strokeWidth="3"
      fill="#000"
      d="M86 684H213V698H86ZM270 684H389V698H270ZM525 684H650V698H536V725H525ZM707 684H836V898H820V698H707ZM836 956V1168H707V1154H820V956ZM86 1154H213V1168H86ZM270 1154H342V791H330V779H353V887H434V824H445V895H353V1019H434V1005H445V1066H434V1030H353V1154H525V956H536V1154H650V1168H270ZM272 779H284V791H272ZM418 778H445V790H418ZM550 698H559V766H525V757H550ZM724 698H736V766H724ZM525 842H724V826H736V842H820V856H536V884H525Z"
    />
    <path stroke={PURPLE} strokeWidth="3" d="M86 684H836V1168H86M-304 697H820V1154H-304ZM284 779H330M284 791H330M418 790V824H445M525 725V757M353 815V860" />
    <path d="M212 664V684M270 664V684M649 664V684M707 664V684M212 1168V1190M270 1168V1190M649 1168V1190M707 1168V1190M836 898H856M836 956H856" stroke="#333" />
    <path d="M80 699H101V712H80ZM80 1142H101V1152H80Z" fill="#000" stroke="none" />
    <text x="509" y="262" {...num} stroke="none">7</text>
    <text x="416" y="755" {...num} stroke="none">1</text>
    <text x="645" y="799" {...num} stroke="none">4</text>
    <text x="678" y="1010" {...num} stroke="none">5</text>
  </g>
);

const Legend = () => (
  <g transform="translate(1160 380) scale(0.33333)" fontFamily="Liberation Sans, sans-serif" fill="#222">
    <text x="168" y="114" fontSize="48" textAnchor="middle" stroke="#222" strokeWidth="2" transform="rotate(-38 168 97)">N</text>
    <g fill="none" stroke="#bbb" strokeWidth="4">
      <circle cx="239" cy="192" r="61" />
      <path d="M288 157L190 228" /><path d="M203 142L275 240" stroke="#888" />
    </g>
    <path d="M160 308H683M179 297H664V319H179Z" fill="none" stroke="#bbb" strokeWidth="2" />
    <path d="M179 308H276V319H179ZM276 297H373V308H276ZM373 308H470V319H373ZM470 297H567V308H470ZM576 308h11v11h-11ZM595 308h11v11h-11ZM615 308h11v11h-11ZM634 308h11v11h-11ZM654 308h11v11h-11Z" fill="#000" />
    {range(6).map((i) => <text key={i} x={179 + i * 97} y="335" fontSize="13" textAnchor="middle">{5 - i}</text>)}
    {legend.map((t, i) => (
      <g key={t} fontSize="33" fontStyle="italic" fill="#333" stroke="#333" strokeWidth="0.600">
        <text x="181" y={419 + i * 57.2}>{i + 1}</text>
        <text x="285" y={419 + i * 57.2}>{t}</text>
      </g>
    ))}
  </g>
);

const Viewport = () => (
  <section className="relative min-h-0 flex-1 overflow-hidden border border-[#b9c1d6] bg-[#9ca3ab]">
    <svg className="absolute inset-0 h-full w-full" aria-hidden="true">
      <defs>
        <pattern id="minor" width="32.450" height="32.450" x="14.500" y="10.300" patternUnits="userSpaceOnUse">
          <path d="M0.500 0V33M0 0.500H33" stroke="#929aa3" fill="none" />
        </pattern>
        <pattern id="major" width="324.500" height="324.500" x="14.500" y="107" patternUnits="userSpaceOnUse">
          <path d="M0.500 0V325M0 0.500H325" stroke="#848b96" fill="none" />
        </pattern>
      </defs>
      <rect width="100%" height="100%" fill="url(#minor)" />
      <rect width="100%" height="100%" fill="url(#major)" />
    </svg>
    <svg viewBox="403 317 1084 423" className="absolute left-[250px] top-[121px] w-[1084px] bg-white" role="img" aria-label="Floor plan">
      <Terrace />
      <House />
      <Legend />
    </svg>
    <div className="absolute left-0 top-0 flex h-[22px] bg-[#69a3ff] font-bold text-[#101828]">
      <button type="button" className="pl-2 pr-[9px] leading-[22px]">Top</button>
      <button type="button" aria-label="Viewport menu" className="flex w-[15px] items-center justify-center border-l border-[#2d4f8a]">
        <svg viewBox="0 0 8 5" className="h-[5px] w-2"><path d="M0 0H8L4 5Z" fill="#101828" /></svg>
      </button>
    </div>
    <svg viewBox="0 0 56 60" className="absolute bottom-[37px] left-10 h-[60px] w-14 overflow-visible" aria-hidden="true" fontFamily="Open Sans, sans-serif" fontSize="15" fill="#4c5056">
      <path d="M4.500 20V55.500H41" fill="none" stroke="#55595f" />
      <text x="7" y="16">y</text>
      <text x="44" y="57">x</text>
    </svg>
  </section>
);

const ViewTabs = () => (
  <div className="flex h-7 shrink-0 items-start bg-[#d7d8dc] text-[#6d6e72]">
    <button type="button" className="h-[27px] rounded-b-md border border-t-0 border-[#c3c9dc] bg-[#e9eaed] px-[13px] pt-0.5 text-[#222]">Top</button>
    <button type="button" className="h-[27px] px-[11px] pt-0.5">Perspective</button>
    <button type="button" className="h-[27px] px-[11px] pt-0.5">Front</button>
    <button type="button" className="h-[27px] px-[11px] pt-0.5">Right</button>
    <button type="button" aria-label="Add viewport" className="flex h-[27px] items-center px-3 pt-0.5">
      <svg viewBox="0 0 12 12" className="size-3"><path d="M4.500 0.500H7.500V4.500H11.500V7.500H7.500V11.500H4.500V7.500H0.500V4.500H4.500Z" fill="#f2f2f4" stroke="#777" /></svg>
    </button>
  </div>
);

const grey = { fill: "#dfe0e3", stroke: "#a9aaae", strokeWidth: 1.5 };
const layerTools: [string, React.ReactNode][] = [
  ["New layer", <g key="a"><g transform="scale(.62)"><LayerGlyph /></g><path d="M14 9V18M9.500 13.500H18.500" stroke="#fff" strokeWidth="4.500" /><path d="M14 9V18M9.500 13.500H18.500" stroke="#111" strokeWidth="2.600" /></g>],
  ["New sublayer", <g key="b" {...grey}><path d="M2 2L9 4V8L5 10L2 8ZM10 9L18 10V15L13 18L10 15Z" /><path d="M3 12V16H8M6 14L8 16L6 18" fill="none" /></g>],
  ["Delete layer", <path key="c" {...grey} d="M2 3L4 1L10 7.500L16 1L18 3L12 9.500L18 16L16 18L10 11.500L4 18L2 16L8 9.500Z" />],
  ["Duplicate layer", <g key="d" {...grey}><path d="M5 14A7 7 0 1 1 13 4L15 3V8H10L11 6A5 5 0 0 0 6 12Z" /><path d="M7 9L9 7L18 10V15L12 18L7 14Z" /></g>],
  ["Move up", <path key="e" {...grey} d="M10 4L18 14H2Z" />],
  ["Move down", <path key="f" {...grey} d="M10 15L18 5H2Z" />],
  ["Move to parent", <path key="g" {...grey} d="M5 10L15 2V18Z" />],
  ["Filter", <path key="h" d="M2 2H18V4L12 10V18L8 16V10L2 4Z" fill="#5b86f0" stroke="#14206e" strokeWidth="1.500" />],
  ["Columns", <g key="i"><rect x="3" y="2" width="14" height="16" fill="#fff" stroke="#555" /><path d="M3 7.500H17M3 11H17M3 14.500H17M6.500 4V18M10 4V18M13.500 4V18" stroke="#666" fill="none" /><path d="M3 2H17V4H3Z" fill="#333" /></g>],
  ["Menu", <path key="j" d="M3 3.500H17M3 10H17M3 16.500H17" stroke="#111" strokeWidth="2.500" />],
  ["Help", <g key="k" transform="translate(-2 -2) scale(.8)"><HelpGlyph /></g>],
];

const Bulb = () => (
  <svg viewBox="0 0 14 18" className="mx-auto h-[18px] w-3.5" aria-hidden="true">
    <path d="M7 1C3 1 1.500 4 2 6.500C2.500 8.500 4 9.500 4.500 12H9.500C10 9.500 11.500 8.500 12 6.500C12.500 4 11 1 7 1Z" fill="#ffd916" stroke="#8a7000" />
    <path d="M5 12.500H9V15L7 16.500L5 15Z" fill="#888" stroke="#555" />
  </svg>
);

const Padlock = ({ open }: { open: boolean }) => (
  <svg viewBox="0 0 16 18" className="mx-auto h-[18px] w-4" aria-hidden="true">
    <path d={open ? "M9 8V5Q9 2 12 2Q15 2 15 5V7" : "M5 8V5Q5 2 8 2Q11 2 11 5V8"} fill="none" stroke="#555" strokeWidth="1.600" />
    <rect x={open ? 1.5 : 3} y="8" width="10" height="8" fill={open ? "#ffe04a" : "#5b96dc"} stroke={open ? "#7a6000" : "#2a4f86"} />
  </svg>
);

const layers = [
  { name: "Default", swatch: "bg-black", lock: "open" },
  { name: "imagem", swatch: "bg-[#cc0000]", lock: "locked" },
  { name: "planta-RC", swatch: "bg-[#7d20d0]", lock: "" },
];

const LayersPanel = () => (
  <aside className="flex w-[324px] shrink-0 flex-col rounded-t-lg bg-[#e9eaed]">
    <div className="flex h-6 items-center justify-between border-b border-[#dddee2] pl-0.5 pr-[5px] text-[#6d6e72]">
      <h2>Layers</h2>
      <button type="button" aria-label="Panel options"><Gear /></button>
    </div>
    <div className="flex min-h-0 flex-1">
      <div className="flex w-[294px] flex-col">
        <div className="flex flex-wrap gap-y-2 pb-[11px] pt-[11px]">
          {layerTools.map(([name, art]) => (
            <button key={name} type="button" aria-label={name} className="flex h-5 w-7 items-center justify-center">
              <svg viewBox="0 0 20 20" className="size-5" aria-hidden="true">{art}</svg>
            </button>
          ))}
        </div>
        <label className="mx-px flex h-[27px] items-center gap-0.5 rounded-full border border-[#bfc6dc] bg-white pl-1.5">
          <svg viewBox="0 0 14 14" className="size-3.5" aria-hidden="true">
            <circle cx="6" cy="6" r="4.700" fill="none" stroke="#222" strokeWidth="1.300" />
            <path d="M9.500 9.500L13.500 13.500" stroke="#222" strokeWidth="1.600" />
          </svg>
          <input type="text" aria-label="Search" placeholder="Search" className="min-w-0 flex-1 bg-transparent outline-none placeholder:text-[#6d6e72]" />
        </label>
        <div className="mt-2 flex flex-1 flex-col justify-between bg-white">
          <table className="w-full table-fixed border-collapse text-left">
            <thead>
              <tr className="h-[29px] border-b border-[#d9dbe2]">
                <th className="w-[100px] pl-1.5 font-normal">Layer</th>
                <th className="w-[25px] border-l border-[#d9dbe2]" aria-label="Current" />
                <th className="w-[25px] border-l border-[#d9dbe2]" aria-label="On" />
                <th className="w-[25px] border-l border-[#d9dbe2]" aria-label="Locked" />
                <th className="w-[25px] border-l border-[#d9dbe2]" aria-label="Color" />
                <th className="border-l border-[#d9dbe2] pl-1.5 font-normal">Material</th>
              </tr>
            </thead>
            <tbody>
              {layers.map((l) => (
                <tr key={l.name} className="h-6 border-b border-dashed border-[#dcdee5]">
                  <td className={"whitespace-nowrap pl-[21px] " + (l.lock ? "" : "font-bold")}>{l.name}</td>
                  <td>
                    {!l.lock && (
                      <svg viewBox="0 0 18 14" className="ml-1 h-3.5 w-[18px]" aria-label="Current layer">
                        <path d="M1 7L6 12L17 2" fill="none" stroke="#222" strokeWidth="1.800" />
                      </svg>
                    )}
                  </td>
                  <td>{l.lock && <Bulb />}</td>
                  <td>{l.lock && <Padlock open={l.lock === "open"} />}</td>
                  <td><span className={"mx-auto block size-[18px] border border-black " + l.swatch} /></td>
                  <td><span className="ml-0.5 block size-[17px] rounded-full border border-[#444] bg-white" /></td>
                </tr>
              ))}
            </tbody>
          </table>
          <div className="mb-1 ml-2.5 h-3 w-[114px] rounded-md bg-[#c2c2c2]" />
        </div>
      </div>
      <nav className="ml-[5px] flex flex-1 flex-col bg-[#d7d8dc]">
        <button type="button" aria-label="Layers panel" className="flex h-11 items-center justify-center rounded-br-md bg-[#e9eaed]">
          <svg viewBox="0 0 30 30" className="size-5" aria-hidden="true"><LayerGlyph /></svg>
        </button>
        <button type="button" aria-label="Properties panel" className="flex h-[45px] items-center justify-center"><ColorRing small /></button>
        <button type="button" aria-label="Display panel" className="flex h-[45px] items-center justify-center">
          <svg viewBox="0 0 20 20" className="size-5" aria-hidden="true">
            <rect x="1.500" y="2" width="17" height="13" fill="url(#greyg)" stroke="#111" strokeWidth="2" />
            <path d="M8 15H12V17H15V19H5V17H8Z" fill="#111" />
          </svg>
        </button>
        <button type="button" aria-label="Help panel" className="flex h-[45px] items-center justify-center">
          <svg viewBox="0 0 20 20" className="size-5" aria-hidden="true">
            <rect x="1.500" y="1.500" width="17" height="17" fill="#fff" stroke="#222" strokeWidth="1.500" />
            <path d="M1 1H19V5H1Z" fill="#243a8c" />
            <circle cx="10" cy="12" r="6" fill="url(#helpg)" />
            <text x="10" y="16" textAnchor="middle" fontFamily="Liberation Serif, serif" fontWeight="bold" fontSize="12" fill="#fff">?</text>
          </svg>
        </button>
        <button type="button" aria-label="Notifications" className="flex h-[45px] items-center justify-center">
          <svg viewBox="0 0 20 20" className="size-5" aria-hidden="true">
            <path d="M10 1.500V3Q15 4 15.500 9.500Q15.500 13 18.500 15.500H1.500Q4.500 13 4.500 9.500Q5 4 10 3Z" fill="#0a84ff" stroke="#111" strokeWidth="1.200" />
            <path d="M7.500 16.500H12.500L10 19Z" fill="#111" />
          </svg>
        </button>
      </nav>
    </div>
  </aside>
);

const PaneIcon = ({ flip = false }: { flip?: boolean }) => (
  <svg viewBox="0 0 18 18" className="size-[18px]" aria-hidden="true">
    <rect x="1" y="1" width="16" height="16" fill="#fff" stroke="#444" strokeWidth="2" />
    <path d={flip ? "M11 1H17V17H11Z" : "M1 1H7V17H1Z"} fill="#444" />
  </svg>
);

const on = "h-full rounded-sm bg-[#cfd7ec] px-2.5 font-bold text-[#222]";

const StatusBar = () => (
  <footer className="flex h-[25px] shrink-0 items-center whitespace-nowrap bg-[#e9eaed] pt-px text-[#4a4b4f]">
    <button type="button" aria-label="Toggle left sidebar" className="ml-2"><PaneIcon /></button>
    <button type="button" className="ml-[26px] w-[91px] text-left">CPlane</button>
    <span className="w-[107px]">x 15.3789</span>
    <span className="w-[129px]">y 32.6086</span>
    <span className="w-[101px]">z 0</span>
    <button type="button" className="w-[90px] text-left">Meters</button>
    <button type="button" className="flex items-center gap-2">
      <span className="size-5 border-2 border-black bg-[#7d20d0]" />
      planta-RC
    </button>
    <span className="flex-1" />
    <button type="button" className="w-[79px] text-left">Grid Snap</button>
    <button type="button" className={on}>Ortho</button>
    <button type="button" className="w-[70px]">Planar</button>
    <button type="button" className={on}>Osnap</button>
    <button type="button" className="w-[105px]">SmartTrack</button>
    <button type="button" className={on}>Gumball (CPlane)</button>
    <button type="button" className="ml-3 flex items-center gap-3">
      <svg viewBox="0 0 12 16" className="h-4 w-3" aria-hidden="true">
        <path d="M3 7V4.500Q3 1.500 6 1.500Q9 1.500 9 4.500V7" fill="none" stroke="#999" strokeWidth="1.400" />
        <rect x="1" y="7" width="10" height="8" fill="#ddd" stroke="#999" />
      </svg>
      Auto CPlane (Object)
    </button>
    <button type="button" className="w-[146px] pr-4 text-right">Record History</button>
    <button type="button" className={on}>Filter</button>
    <span className="ml-[17px] w-[164px]">CPU use: 0.7 %</span>
    <button type="button" aria-label="Toggle right sidebar" className="mr-2"><PaneIcon flip /></button>
  </footer>
);

export default function App() {
  return (
    <div className="flex h-screen flex-col overflow-hidden bg-[#e9eaed] font-['Open_Sans','Noto_Sans',sans-serif] text-sm leading-5 text-[#2b2b2b]">
      <Defs />
      <TitleBar />
      <nav className="flex h-[26px] shrink-0 items-center gap-px pb-0.5">
        {menus.map((m) => (
          <button key={m} type="button" className="px-[9px]">{m}</button>
        ))}
      </nav>
      <CommandArea />
      <ToolBar />
      <main className="flex min-h-0 flex-1 bg-[#d7d8dc] pl-0.5">
        <div className="flex w-[146px] shrink-0 flex-col gap-[3px]">
          <ToolBox />
          <OsnapPanel />
        </div>
        <div className="ml-1 mr-[3px] flex min-w-0 flex-1 flex-col pt-px">
          <Viewport />
          <ViewTabs />
        </div>
        <LayersPanel />
      </main>
      <StatusBar />
    </div>
  );
}
